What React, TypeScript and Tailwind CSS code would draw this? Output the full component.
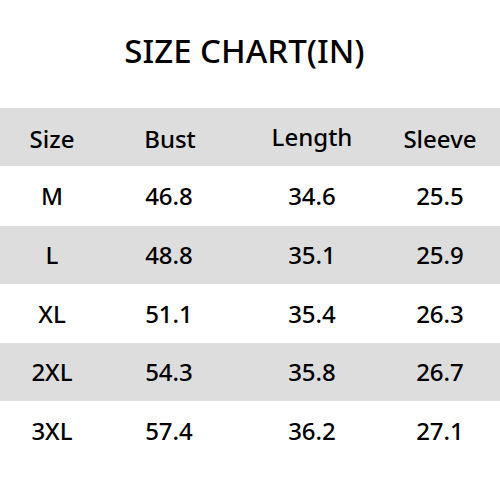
import React from "react";

const header = ["Size", "Bust", "Length", "Sleeve"];
const rows = [
  { cells: ["M", "46.8", "34.6", "25.5"], cls: "h-[60px] bg-white" },
  { cells: ["L", "48.8", "35.1", "25.9"], cls: "h-[58px] bg-[#dddddd]" },
  { cells: ["XL", "51.1", "35.4", "26.3"], cls: "h-[59px] bg-white" },
  { cells: ["2XL", "54.3", "35.8", "26.7"], cls: "h-[58px] bg-[#dddddd]" },
  { cells: ["3XL", "57.4", "36.2", "27.1"], cls: "h-[59px] bg-white" },
];

export default function App() {
  return (
    <div
      className="w-[500px] h-[500px] bg-white text-black overflow-hidden font-medium"
      style={{ fontFamily: '"Noto Sans", "Open Sans", sans-serif' }}
    >
      <div className="h-[108px] pt-[29px] pr-[11px] text-center text-[33px] leading-[44px]">
        SIZE CHART(IN)
      </div>
      <div className="grid grid-cols-[104px_130px_156px_100px] h-[58px] bg-[#dddddd] items-center text-[24px] leading-[32px] text-center">
        <div className="translate-y-[2px]">{header[0]}</div>
        <div className="translate-y-[2px] pl-[2px]">{header[1]}</div>
        <div>{header[2]}</div>
        <div className="translate-y-[2px]">{header[3]}</div>
      </div>
      {rows.map((r) => (
        <div
          key={r.cells[0]}
          className={`grid grid-cols-[104px_130px_156px_100px] items-center text-[24px] leading-[32px] text-center ${r.cls}`}
        >
          {r.cells.map((c, i) => (
            <div key={i}>{c}</div>
          ))}
        </div>
      ))}
    </div>
  );
}
